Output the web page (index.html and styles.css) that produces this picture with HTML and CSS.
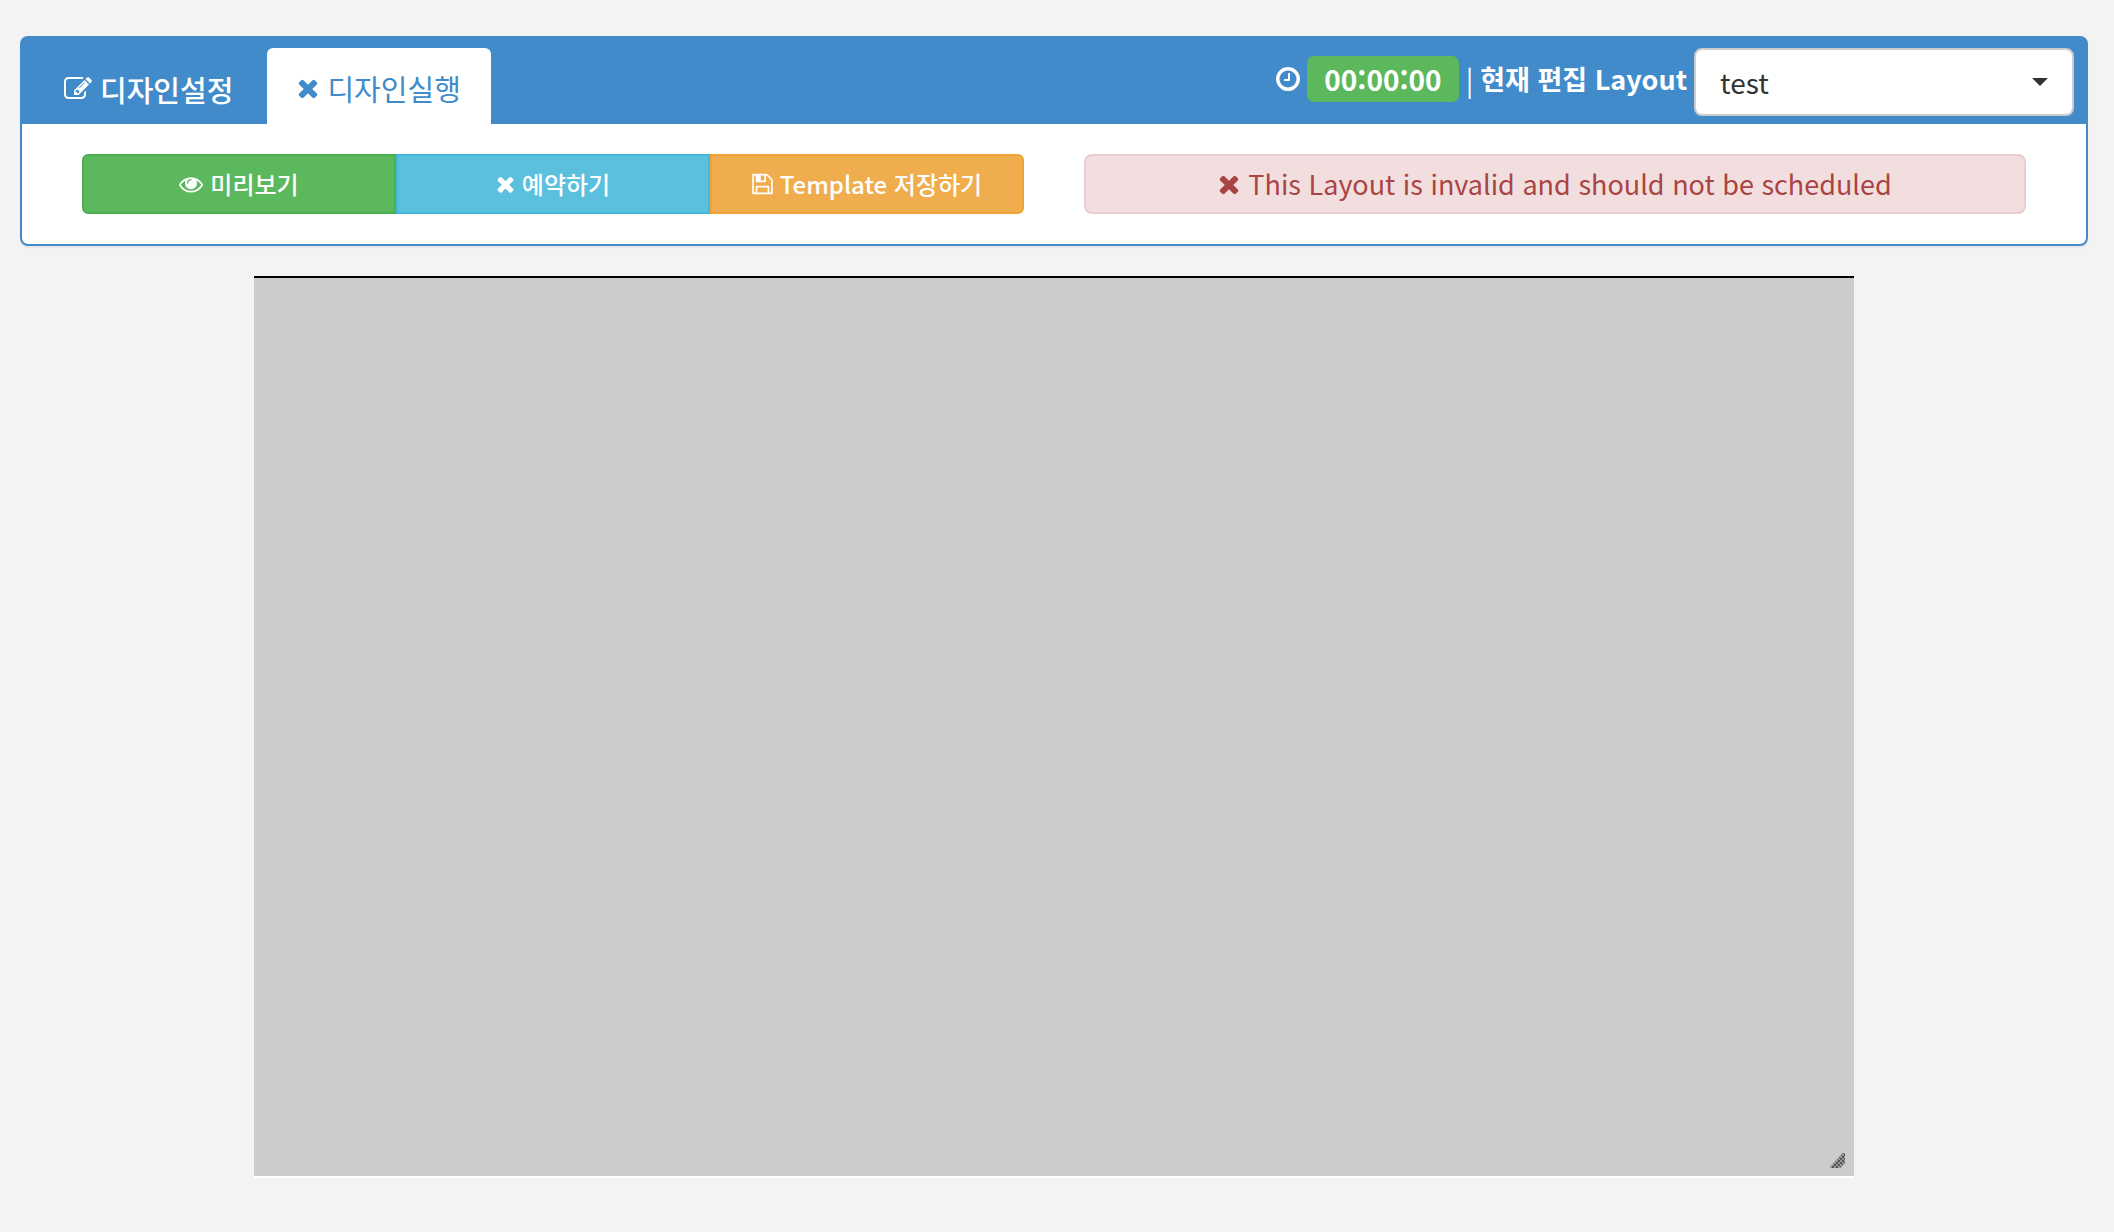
FILE: index.html
```html
<!DOCTYPE html>
<html lang="ko">
<head>
<meta charset="utf-8">
<title>Layout Designer</title>
<link rel="stylesheet" href="styles.css">
</head>
<body>
<svg class="sprite" aria-hidden="true">
  <symbol id="times" viewBox="192 0 1408 1792"><path d="M1490 1322q0 40-28 68l-136 136q-28 28-68 28t-68-28l-294-294-294 294q-28 28-68 28t-68-28l-136-136q-28-28-28-68t28-68l294-294-294-294q-28-28-28-68t28-68l136-136q28-28 68-28t68 28l294 294 294-294q28-28 68-28t68 28l136 136q28 28 28 68t-28 68l-294 294 294 294q28 28 28 68z"/></symbol>
  <symbol id="clock" viewBox="128 0 1536 1792"><path d="M1024 544v448q0 14-9 23t-23 9h-320q-14 0-23-9t-9-23v-64q0-14 9-23t23-9h224v-352q0-14 9-23t23-9h64q14 0 23 9t9 23zm416 352q0-148-73-273t-198-198-273-73-273 73-198 198-73 273 73 273 198 198 273 73 273-73 198-198 73-273zm224 0q0 209-103 385.500t-279.500 279.500-385.500 103-385.500-103-279.500-279.500-103-385.500 103-385.500 279.500-279.500 385.500-103 385.500 103 279.500 279.500 103 385.500z"/></symbol>
  <symbol id="eye" viewBox="0 0 1792 1792"><path d="M1664 960q-152-236-381-353 61 104 61 225 0 185-131.500 316.500t-316.500 131.500-316.500-131.500-131.500-316.500q0-121 61-225-229 117-381 353 133 205 333.500 326.500t434.500 121.500 434.500-121.500 333.500-326.500zm-720-384q0-20-14-34t-34-14q-125 0-214.500 89.500t-89.500 214.500q0 20 14 34t34 14 34-14 14-34q0-86 61-147t147-61q20 0 34-14t14-34zm848 384q0 34-20 69-140 230-376.500 368.500t-499.500 138.500-499.500-139-376.500-368q-20-35-20-69t20-69q140-229 376.500-368t499.500-139 499.500 139 376.500 368q20 35 20 69z"/></symbol>
  <symbol id="floppy" viewBox="128 0 1536 1792"><path d="M512 1536h768v-384h-768v384zm896 0h128v-896q0-14-10-38.500t-20-34.500l-281-281q-10-10-34-20t-39-10v416q0 40-28 68t-68 28h-576q-40 0-68-28t-28-68v-416h-128v1280h128v-416q0-40 28-68t68-28h832q40 0 68 28t28 68v416zm-384-928v-320q0-13-9.500-22.500t-22.500-9.500h-192q-13 0-22.500 9.500t-9.500 22.500v320q0 13 9.500 22.500t22.500 9.500h192q13 0 22.500-9.500t9.500-22.500zm640 32v928q0 40-28 68t-68 28h-1344q-40 0-68-28t-28-68v-1344q0-40 28-68t68-28h928q40 0 88 20t76 48l280 280q28 28 48 76t20 88z"/></symbol>
  <symbol id="pencil" viewBox="0 0 1792 1792"><path d="M888 1184l116-116-152-152-116 116v56h96v96h56zm440-720q-16-16-33 1l-350 350q-17 17-1 33t33-1l350-350q17-17 1-33zm80 594v190q0 119-84.500 203.500t-203.500 84.500h-832q-119 0-203.500-84.500t-84.500-203.500v-832q0-119 84.500-203.500t203.500-84.500h832q63 0 117 25 15 7 18 23 3 17-9 29l-49 49q-14 14-32 8-23-6-45-6h-832q-66 0-113 47t-47 113v832q0 66 47 113t113 47h832q66 0 113-47t47-113v-126q0-13 9-22l64-64q15-15 35-7t20 29zm-96-738l288 288-672 672h-288v-288zm444 132l-92 92-288-288 92-92q28-28 68-28t68 28l152 152q28 28 28 68t-28 68z"/></symbol>
</svg>
<main class="page">
  <section class="panel">
    <header class="panel-heading">
      <nav class="tabs">
        <a class="tab" href="#settings"><svg class="icon" aria-hidden="true"><use href="#pencil"/></svg>디자인설정</a>
        <a class="tab tab-active" href="#actions" aria-current="page"><svg class="icon icon-times" aria-hidden="true"><use href="#times"/></svg>디자인실행</a>
      </nav>
      <div class="jump">
        <div class="status">
          <svg class="icon icon-clock" aria-hidden="true"><use href="#clock"/></svg>
          <span class="duration">00:00:00</span>
          <span class="divider">|</span>
          <label class="picker-label" for="layout">현재 편집 Layout</label>
        </div>
        <div class="picker">
          <select id="layout"><option>test</option></select>
          <svg class="caret" viewBox="0 0 16 8" aria-hidden="true"><path d="M0 0h16l-8 8z"/></svg>
        </div>
      </div>
    </header>
    <div class="panel-body">
      <div class="actions">
        <button class="btn btn-success" type="button"><svg class="icon" aria-hidden="true"><use href="#eye"/></svg>미리보기</button>
        <button class="btn btn-info" type="button"><svg class="icon icon-times" aria-hidden="true"><use href="#times"/></svg>예약하기</button>
        <button class="btn btn-warning" type="button"><svg class="icon icon-floppy" aria-hidden="true"><use href="#floppy"/></svg>Template 저장하기</button>
      </div>
      <div class="alert" role="alert"><svg class="icon icon-times" aria-hidden="true"><use href="#times"/></svg>This Layout is invalid and should not be scheduled</div>
    </div>
  </section>
  <div class="layout-canvas">
    <svg class="grip" viewBox="0 0 16 16" aria-hidden="true">
      <defs>
        <pattern id="checks" width="4" height="4" patternUnits="userSpaceOnUse">
          <path class="grip-base" d="M0 0h4v4H0z"/>
          <path class="grip-check" d="M0 0h2v2H0zM2 2h2v2H2z"/>
        </pattern>
      </defs>
      <path fill="url(#checks)" d="M0 15L13 1h2v10l-5 5H0z"/>
    </svg>
  </div>
</main>
</body>
</html>
```
FILE: styles.css
```css
* {
  box-sizing: border-box;
}

body {
  margin: 0;
  background: #f3f3f3;
  color: #333;
  font: 28px/40px "Noto Sans CJK KR", sans-serif;
}

.sprite {
  display: none;
}

.page {
  padding: 36px 26px 54px 20px;
}

.icon {
  flex: none;
  width: 28px;
  height: 28px;
  fill: currentColor;
}

.icon-times {
  width: 22px;
}

.icon-clock {
  width: 24px;
}

.panel {
  border: 2px solid #428bca;
  border-radius: 8px;
  background: #fff;
  box-shadow: 0 2px 2px rgba(0, 0, 0, 0.05);
}

.panel-heading {
  display: flex;
  justify-content: space-between;
  padding: 10px 12px 0;
  background: #428bca;
  color: #fff;
}

.tabs {
  display: flex;
  gap: 4px;
}

.tab {
  display: flex;
  align-items: center;
  gap: 8px;
  height: 76px;
  padding: 6px 30px 0;
  border-radius: 6px 6px 0 0;
  color: #fff;
  font-size: 29px;
  font-weight: 500;
  text-decoration: none;
}

.tab-active {
  padding-top: 4px;
  background: #fff;
  color: #428bca;
  font-weight: 400;
}

.jump {
  display: flex;
  gap: 7px;
  font-weight: 700;
}

.status {
  display: flex;
  align-items: center;
  gap: 7px;
  height: 62px;
}

.duration {
  padding: 3px 17px;
  border-radius: 7px;
  background: #5cb85c;
}

.divider {
  font-weight: 400;
}

.picker-label {
  font-size: 27px;
}

.picker {
  display: grid;
  align-items: center;
  width: 380px;
  height: 68px;
}

.picker select {
  grid-area: 1 / 1;
  width: 100%;
  height: 100%;
  padding: 0 24px;
  appearance: none;
  border: 2px solid #ccc;
  border-radius: 8px;
  background: #fff;
  color: #333;
  font: inherit;
  font-weight: 400;
}

.caret {
  grid-area: 1 / 1;
  justify-self: end;
  width: 16px;
  height: 8px;
  margin-right: 26px;
  fill: #333;
  pointer-events: none;
}

.panel-body {
  display: grid;
  grid-template-columns: 1fr 1fr;
  gap: 60px;
  padding: 30px 60px;
}

.actions {
  display: grid;
  grid-template-columns: repeat(3, 1fr);
}

.btn {
  display: flex;
  align-items: center;
  justify-content: center;
  gap: 7px;
  height: 60px;
  padding: 0;
  border: 2px solid;
  color: #fff;
  font: inherit;
  font-size: 24px;
  font-weight: 500;
}

.btn .icon {
  width: 24px;
  height: 24px;
}

.btn .icon-times {
  width: 19px;
}

.btn .icon-floppy {
  width: 21px;
}

.btn-success {
  border-color: #4cae4c;
  border-radius: 6px 0 0 6px;
  background: #5cb85c;
}

.btn-info {
  border-color: #46b8da;
  background: #5bc0de;
}

.btn-warning {
  border-color: #eea236;
  border-radius: 0 6px 6px 0;
  background: #f0ad4e;
}

.alert {
  display: flex;
  align-items: center;
  justify-content: center;
  gap: 8px;
  height: 60px;
  border: 2px solid #ebccd1;
  border-radius: 8px;
  background: #f2dede;
  color: #a94442;
  font-size: 27px;
}

.layout-canvas {
  display: flex;
  align-items: flex-end;
  justify-content: flex-end;
  max-width: 1600px;
  aspect-ratio: 1600 / 902;
  margin: 30px auto 0;
  padding: 8px;
  border-top: 2px solid #000;
  border-bottom: 2px solid #fff;
  background: #ccc;
}

.grip {
  width: 16px;
  height: 16px;
}

.grip-base {
  fill: #999;
}

.grip-check {
  fill: #555;
}
```
